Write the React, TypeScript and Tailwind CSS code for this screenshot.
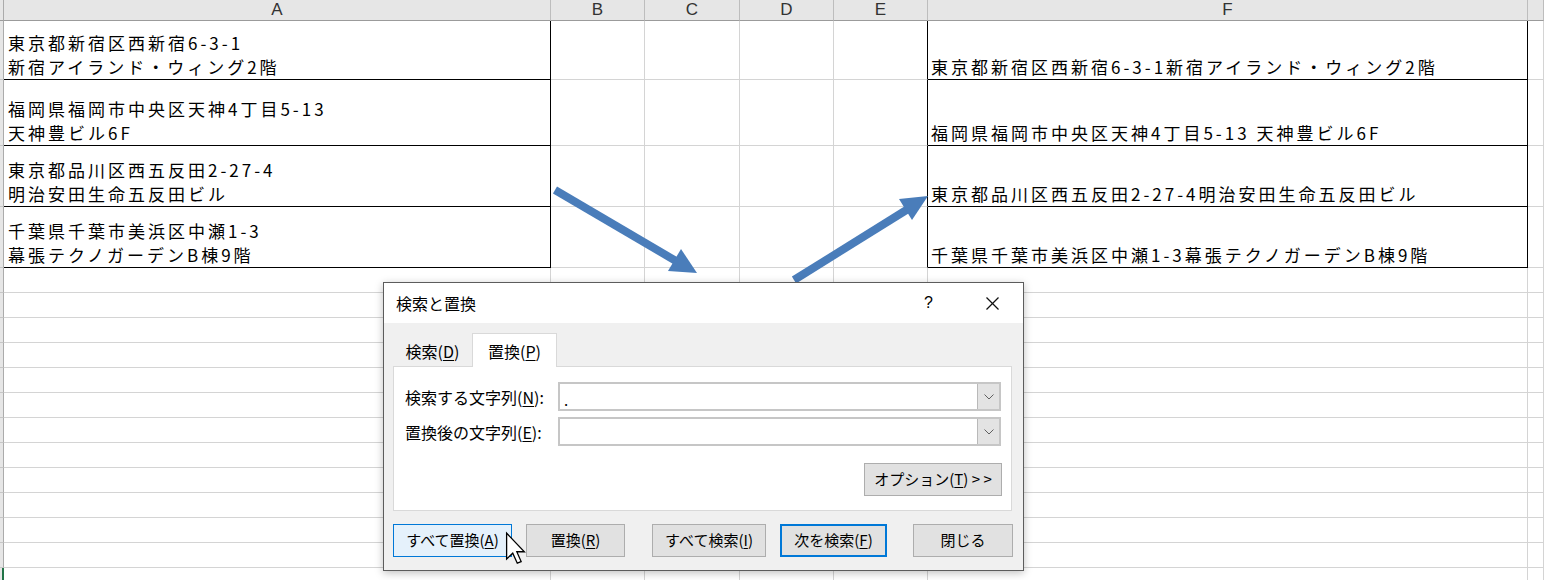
import React from "react";

const ROWS = [
  {
    a: ["東京都新宿区西新宿6-3-1", "新宿アイランド・ウィング2階"],
    f: "東京都新宿区西新宿6-3-1新宿アイランド・ウィング2階",
  },
  {
    a: ["福岡県福岡市中央区天神4丁目5-13", "天神豊ビル6F"],
    f: "福岡県福岡市中央区天神4丁目5-13 天神豊ビル6F",
  },
  {
    a: ["東京都品川区西五反田2-27-4", "明治安田生命五反田ビル"],
    f: "東京都品川区西五反田2-27-4明治安田生命五反田ビル",
  },
  {
    a: ["千葉県千葉市美浜区中瀬1-3", "幕張テクノガーデンB棟9階"],
    f: "千葉県千葉市美浜区中瀬1-3幕張テクノガーデンB棟9階",
  },
];

const HEADERS = ["A", "B", "C", "D", "E", "F", ""];

const GRID = "border-r border-b border-r-[#d4d4d4] border-b-[#d4d4d4]";
const BOXED = "border-r border-b border-r-black border-b-black";
const EDGE_E = "border-r border-b border-r-black border-b-[#d4d4d4]";
const ROW_HEAD = "bg-[#e6e6e6] border-r border-b border-r-[#ababab] border-b-[#c6c6c6]";
const CELL_TEXT =
  "font-['Noto_Sans_CJK_JP',sans-serif] text-[17px] leading-[24px] tracking-[3px] text-black whitespace-pre";

function Sheet() {
  const emptyRows = Array.from({ length: 13 });
  return (
    <div className="grid grid-cols-[4px_547px_94px_95px_94px_94px_600px_1fr] grid-rows-[21px_59px_66px_61px_61px_repeat(13,25px)]">
      {/* column headers */}
      <div className="bg-[#e6e6e6] border-r border-b border-r-[#ababab] border-b-[#9b9b9b]" />
      {HEADERS.map((h, i) => (
        <div
          key={i}
          className="bg-[#e6e6e6] border-r border-b border-r-[#bdbdbd] border-b-[#9b9b9b] flex items-center justify-center font-['Liberation_Sans',sans-serif] text-[17px] text-[#333]"
        >
          {h}
        </div>
      ))}

      {/* address rows */}
      {ROWS.map((row, r) => (
        <React.Fragment key={r}>
          <div className={ROW_HEAD} />
          <div className={`${BOXED} flex flex-col justify-end pl-[4px] ${CELL_TEXT}`}>
            <div>{row.a[0]}</div>
            <div>{row.a[1]}</div>
          </div>
          <div className={GRID} />
          <div className={GRID} />
          <div className={GRID} />
          <div className={EDGE_E} />
          <div className={`${BOXED} flex flex-col justify-end pl-[3px] ${CELL_TEXT}`}>
            <div>{row.f}</div>
          </div>
          <div className={GRID} />
        </React.Fragment>
      ))}

      {/* empty rows */}
      {emptyRows.map((_, r) => (
        <React.Fragment key={`e${r}`}>
          <div
            className={
              r === emptyRows.length - 1
                ? "bg-[#e6e6e6] border-r-2 border-r-[#217346]"
                : ROW_HEAD
            }
          />
          {HEADERS.map((_, c) => (
            <div key={c} className={GRID} />
          ))}
        </React.Fragment>
      ))}
    </div>
  );
}

function Arrows() {
  return (
    <svg
      className="absolute left-0 top-0 pointer-events-none"
      width="1544"
      height="580"
      viewBox="0 0 1544 580"
    >
      <line x1="555" y1="190" x2="676" y2="261" stroke="#4a7dba" strokeWidth="8" />
      <polygon points="697,273 668,271 681,249" fill="#4a7dba" />
      <line x1="794" y1="280" x2="908" y2="209" stroke="#4a7dba" strokeWidth="8" />
      <polygon points="928,196 912,220 899,199" fill="#4a7dba" />
    </svg>
  );
}

function Chevron() {
  return (
    <svg width="10" height="6" viewBox="0 0 10 6">
      <polyline points="0.5,0.5 5,5 9.5,0.5" fill="none" stroke="#606060" strokeWidth="1" />
    </svg>
  );
}

function Combo({ value }: { value?: string }) {
  return (
    <div className="w-[443px] h-[29px] flex border-2 border-[#c6c6c6] bg-white">
      <div className="flex-1 flex items-end pl-[4px] pb-[2px] leading-none text-[15px]">
        {value}
      </div>
      <div className="w-[22px] bg-[#e3e3e3] border-l border-[#b9b9b9] flex items-center justify-center">
        <Chevron />
      </div>
    </div>
  );
}

function Btn({
  children,
  className,
}: {
  children: React.ReactNode;
  className: string;
}) {
  return (
    <div className={`h-[33px] flex items-center justify-center ${className}`}>
      {children}
    </div>
  );
}

function Dialog() {
  return (
    <div className="absolute left-[383px] top-[282px] w-[641px] h-[289px] flex flex-col border border-[#5c5c5c] bg-[#f0f0f0] shadow-[0_2px_8px_rgba(0,0,0,0.25)] font-['Noto_Sans_CJK_JP',sans-serif] text-[15px] text-black">
      {/* title bar */}
      <div className="h-[40px] shrink-0 bg-white flex items-center pl-[12px] pr-[24px]">
        <span className="text-[16px]">検索と置換</span>
        <span className="ml-auto font-['Liberation_Sans',sans-serif] text-[16px]">?</span>
        <svg className="ml-[53px]" width="13" height="13" viewBox="0 0 13 13">
          <line x1="0.5" y1="0.5" x2="12.5" y2="12.5" stroke="#111" strokeWidth="1.2" />
          <line x1="12.5" y1="0.5" x2="0.5" y2="12.5" stroke="#111" strokeWidth="1.2" />
        </svg>
      </div>

      <div className="px-[9px] pt-[10px]">
        {/* tabs */}
        <div className="flex items-end h-[33px]">
          <div className="w-[79px] h-[30px] flex items-center justify-center text-[16px]">
            検索(<span className="underline underline-offset-2">D</span>)
          </div>
          <div className="relative z-10 -mb-px w-[85px] h-[34px] bg-white border border-b-0 border-[#d9d9d9] flex items-center justify-center text-[16px]">
            置換(<span className="underline underline-offset-2">P</span>)
          </div>
        </div>

        {/* panel */}
        <div className="w-[619px] h-[145px] bg-white border border-[#d9d9d9] pt-[15px] pl-[11px] pr-[9px] flex flex-col">
          <div className="flex items-center">
            <div className="w-[153px] text-[16px]">
              検索する文字列(<span className="underline underline-offset-2">N</span>):
            </div>
            <Combo value="." />
          </div>
          <div className="flex items-center mt-[6px]">
            <div className="w-[153px] text-[16px]">
              置換後の文字列(<span className="underline underline-offset-2">E</span>):
            </div>
            <Combo />
          </div>
          <div className="flex justify-end mt-[17px]">
            <Btn className="w-[138px] h-[32px] bg-[#e1e1e1] border border-[#adadad]">
              オプション(<span className="underline underline-offset-2">T</span>)&nbsp;&gt; &gt;
            </Btn>
          </div>
        </div>

        {/* buttons */}
        <div className="flex mt-[13px]">
          <Btn className="w-[119px] bg-[#e5f1fb] border border-[#0078d7]">
            すべて置換(<span className="underline underline-offset-2">A</span>)
          </Btn>
          <Btn className="ml-[14px] w-[99px] bg-[#e1e1e1] border border-[#adadad]">
            置換(<span className="underline underline-offset-2">R</span>)
          </Btn>
          <Btn className="ml-[27px] w-[114px] bg-[#e1e1e1] border border-[#adadad]">
            すべて検索(<span className="underline underline-offset-2">I</span>)
          </Btn>
          <Btn className="ml-[14px] w-[107px] bg-[#e1e1e1] border-2 border-[#0078d7]">
            次を検索(<span className="underline underline-offset-2">F</span>)
          </Btn>
          <Btn className="ml-[26px] w-[100px] bg-[#e1e1e1] border border-[#adadad]">
            閉じる
          </Btn>
        </div>
      </div>
    </div>
  );
}

function Cursor() {
  return (
    <svg
      className="absolute left-[505px] top-[531px] pointer-events-none"
      width="21"
      height="35"
      viewBox="0 0 13 21"
    >
      <path
        d="M1 1 L1 17 L4.8 13.4 L7.6 19.6 L10 18.6 L7.3 12.5 L12 12.5 Z"
        fill="#fff"
        stroke="#000"
        strokeWidth="0.8"
        strokeLinejoin="miter"
      />
    </svg>
  );
}

export default function App() {
  return (
    <div className="relative w-[1544px] h-[580px] overflow-hidden bg-white">
      <Sheet />
      <Arrows />
      <Dialog />
      <Cursor />
    </div>
  );
}
